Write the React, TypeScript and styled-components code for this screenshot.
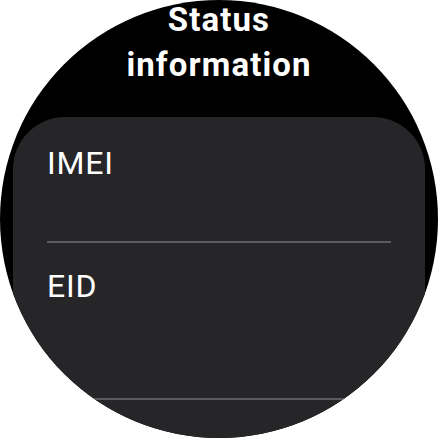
import React from "react";
import styled, { createGlobalStyle } from "styled-components";

const GlobalStyle = createGlobalStyle`
  html, body {
    margin: 0;
    padding: 0;
    background: #ffffff;
  }
  body {
    font-family: Roboto, "Noto Sans", sans-serif;
  }
`;

const Watch = styled.div`
  width: 438px;
  height: 438px;
  border-radius: 50%;
  overflow: hidden;
  background: #000000;
  display: flex;
  flex-direction: column;
  align-items: center;
`;

const Title = styled.h1`
  margin: -3px 0 0;
  font-family: Roboto, "Noto Sans", sans-serif;
  font-weight: 700;
  font-size: 33px;
  line-height: 45px;
  letter-spacing: 1.1px;
  color: #ffffff;
  text-align: center;
`;

const Card = styled.section`
  align-self: stretch;
  margin: 30px 13px 0;
  padding-top: 3px;
  flex: 1;
  background: #262628;
  border-radius: 52px 52px 0 0;
  display: flex;
  flex-direction: column;
`;

const Row = styled.div<{ $height: number }>`
  margin: 0 34px;
  padding-top: 23px;
  height: ${(p) => p.$height}px;
  box-sizing: border-box;
  border-bottom: 2px solid #5c5b60;
  flex-shrink: 0;
`;

const Label = styled.div`
  font-family: Roboto, "Noto Sans", sans-serif;
  font-size: 32px;
  line-height: 40px;
  letter-spacing: 0.8px;
  color: #ffffff;
`;

const rows = [
  { label: "IMEI", height: 123 },
  { label: "EID", height: 157 },
];

export default function App() {
  return (
    <>
      <GlobalStyle />
      <Watch>
        <Title>
          Status
          <br />
          information
        </Title>
        <Card>
          {rows.map((r) => (
            <Row key={r.label} $height={r.height}>
              <Label>{r.label}</Label>
            </Row>
          ))}
        </Card>
      </Watch>
    </>
  );
}
